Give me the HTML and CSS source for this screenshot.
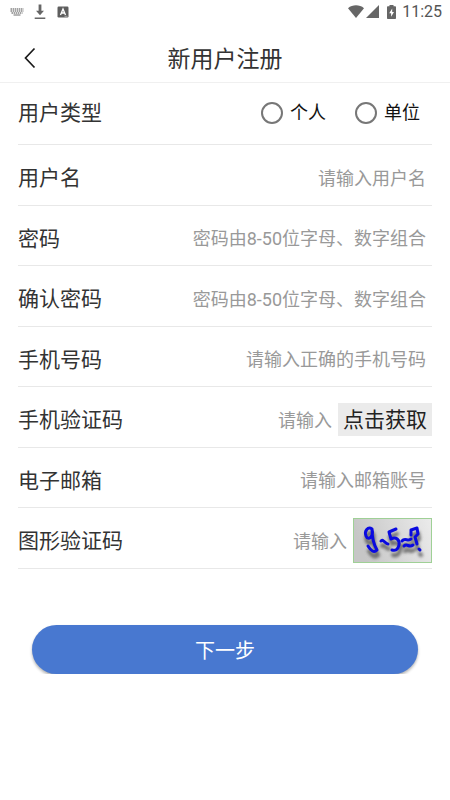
FILE: index.html
```html
<!DOCTYPE html>
<html lang="zh-CN">
<head>
    <meta charset="UTF-8">
    <meta name="viewport" content="width=device-width, initial-scale=1.0">
    <title>新用户注册</title>
    <link rel="stylesheet" href="styles.css">
</head>
<body>
    <!-- 状态栏 -->
    <div class="status-bar">
        <div class="status-left">
            <svg class="icon-keyboard" width="14" height="8" viewBox="0 0 14 8">
                <path d="M0.5 1h13M0.5 3h13M1.5 5h11" stroke="#858585" stroke-width="1.3" stroke-dasharray="1.5 0.6" fill="none"/>
                <path d="M3.5 7h7" stroke="#858585" stroke-width="1.2"/>
            </svg>
            <svg class="icon-download" width="12" height="16" viewBox="0 0 12 16">
                <path d="M4.6 0.5h2.8v6.2h2.6L6 11.2 2 6.7h2.6zM0.7 13.4h10.6v1.5H0.7z" fill="#666"/>
            </svg>
            <svg width="12" height="12" viewBox="0 0 12 12">
                <rect x="0.5" y="0.5" width="11" height="11" rx="1.2" fill="#5e5e5e"/>
                <path d="M3.5 9L6 3l2.5 6M4.3 7h3.4" stroke="#fff" stroke-width="1.3" fill="none"/>
                <path d="M7.5 10.3h3" stroke="#bbb" stroke-width="0.8"/>
            </svg>
        </div>
        <div class="status-right">
            <svg width="16" height="13" viewBox="0 0 16 13">
                <path d="M8 13L0 3.2C4.5-0.6 11.5-0.6 16 3.2z" fill="#666"/>
            </svg>
            <svg class="icon-signal" width="13" height="13" viewBox="0 0 13 13">
                <path d="M13 0v13H0z" fill="#666"/>
            </svg>
            <svg class="icon-battery" width="9" height="14" viewBox="0 0 9 14">
                <path d="M2.5 0h4v1.3H8.2q0.8 0 0.8 0.8V13.2q0 0.8-0.8 0.8H0.8Q0 14 0 13.2V2.1Q0 1.3 0.8 1.3H2.5z" fill="#666"/>
                <path d="M5.2 3.5L2.2 8.3h1.9v3.5L7 7H5.2z" fill="#fff"/>
            </svg>
            <span class="time">11:25</span>
        </div>
    </div>

    <!-- 标题栏 -->
    <header class="header">
        <button type="button" class="back" aria-label="返回">
            <svg width="12" height="22" viewBox="0 0 12 22">
                <path d="M10.5 1.5L1.5 11l9 9.5" stroke="#1a1a1a" stroke-width="1.7" fill="none"/>
            </svg>
        </button>
        <h1>新用户注册</h1>
    </header>

    <!-- 注册表单 -->
    <form class="form">
        <div class="row row-type" role="radiogroup" aria-labelledby="typeLabel">
            <span class="label" id="typeLabel">用户类型</span>
            <div class="options">
                <label class="option"><input type="radio" name="type" value="person">个人</label>
                <label class="option"><input type="radio" name="type" value="company">单位</label>
            </div>
        </div>
        <div class="row">
            <label class="label" for="username">用户名</label>
            <input class="field" type="text" id="username" placeholder="请输入用户名">
        </div>
        <div class="row">
            <label class="label" for="password">密码</label>
            <input class="field" type="password" id="password" placeholder="密码由8-50位字母、数字组合">
        </div>
        <div class="row">
            <label class="label" for="confirm">确认密码</label>
            <input class="field" type="password" id="confirm" placeholder="密码由8-50位字母、数字组合">
        </div>
        <div class="row">
            <label class="label" for="phone">手机号码</label>
            <input class="field" type="tel" id="phone" placeholder="请输入正确的手机号码">
        </div>
        <div class="row">
            <label class="label" for="smsCode">手机验证码</label>
            <input class="field" type="text" id="smsCode" placeholder="请输入">
            <button type="button" class="get-code">点击获取</button>
        </div>
        <div class="row">
            <label class="label" for="email">电子邮箱</label>
            <input class="field" type="email" id="email" placeholder="请输入邮箱账号">
        </div>
        <div class="row">
            <label class="label" for="captcha">图形验证码</label>
            <input class="field" type="text" id="captcha" placeholder="请输入">
            <button type="button" class="captcha" aria-label="刷新验证码">
                <svg width="77" height="43" viewBox="0 0 77 43">
                    <defs>
                        <linearGradient id="captchaBg" x1="0" y1="0.2" x2="1" y2="0">
                            <stop offset="0" stop-color="#c6c6c6"/>
                            <stop offset="1" stop-color="#ebebeb"/>
                        </linearGradient>
                        <filter id="soft" x="-20%" y="-20%" width="140%" height="150%">
                            <feGaussianBlur stdDeviation="1.8"/>
                        </filter>
                        <g id="marks" fill="none" stroke-linecap="round" stroke-linejoin="round">
                            <path d="M18 10C14 7 10 12 12 17C14 22 20 18 18 10C18 17 20 26 23 31C20 34 17 32 14 27"/>
                            <path d="M27 22C29 19 31 25 34 25"/>
                            <path d="M42 10L35 13L37 20C42 17 46 21 45 26C44 31 41 32 38 31"/>
                            <path d="M48 22C51 18 54 23 57 20M50 27C53 24 55 29 59 26"/>
                            <path d="M57 16L57 11L63 9L64 15L61 18L63 25M65 30L66 31"/>
                        </g>
                    </defs>
                    <rect width="77" height="43" fill="url(#captchaBg)"/>
                    <use href="#marks" x="1" y="5" stroke="#444" stroke-width="4" opacity="0.7" filter="url(#soft)"/>
                    <use href="#marks" stroke="#0a0ae0" stroke-width="3"/>
                </svg>
            </button>
        </div>
        <button type="submit" class="next">下一步</button>
    </form>
</body>
</html>
```

FILE: styles.css
```css
* {
    box-sizing: border-box;
}

body {
    margin: 0;
    background-color: #fff;
    color: #333;
    font-family: Roboto, "Noto Sans CJK SC", sans-serif;
}

button,
input {
    margin: 0;
    padding: 0;
    border: none;
    font-family: inherit;
}

button {
    cursor: pointer;
}

svg {
    display: block;
}

/* 状态栏 */
.status-bar {
    display: flex;
    justify-content: space-between;
    align-items: center;
    height: 23px;
    padding: 0 8px 0 10px;
}

.status-left,
.status-right {
    display: flex;
    align-items: center;
}

.icon-download {
    margin: 0 11px 0 10px;
}

.icon-signal {
    margin: 0 8px 0 2px;
}

.icon-battery {
    margin-right: 6px;
}

.time {
    color: #555;
    font-size: 16px;
    line-height: 22px;
}

/* 标题栏 */
.header {
    position: relative;
    height: 60px;
    padding-top: 14px;
    border-bottom: 1px solid #f0f0f0;
}

    .header h1 {
        margin: 0;
        font-size: 23px;
        font-weight: normal;
        line-height: 46px;
        text-align: center;
    }

.back {
    position: absolute;
    top: 13px;
    left: 14px;
    padding: 11px 10px;
    background: none;
}

/* 表单 */
.form {
    padding: 0 18px;
}

.row {
    display: flex;
    align-items: center;
    height: 61px;
    padding-top: 6px;
    border-bottom: 1px solid #e8e8e8;
}

    .row:nth-child(odd) {
        height: 60px;
    }

    .row.row-type {
        justify-content: space-between;
        height: 62px;
        padding: 0 12px 2px 0;
    }

.label {
    flex: none;
    font-size: 21px;
    line-height: 30px;
}

.field {
    flex: 1;
    min-width: 0;
    height: 44px;
    padding-right: 6px;
    background: none;
    color: #333;
    font-size: 18px;
    text-align: right;
    outline: none;
}

    .field::placeholder {
        color: #999;
    }

.options {
    display: flex;
    gap: 29px;
}

.option {
    display: flex;
    align-items: center;
    gap: 7px;
    color: #111;
    font-size: 18px;
    line-height: 30px;
}

    .option input {
        appearance: none;
        width: 22px;
        height: 22px;
        border: 2px solid #777;
        border-radius: 50%;
    }

        .option input:checked {
            border: 7px solid #4878d0;
        }

.get-code {
    height: 33px;
    margin-bottom: 2px;
    padding: 0 5px;
    background-color: #ebebeb;
    color: #222;
    font-size: 21px;
    line-height: 35px;
}

.captcha {
    margin-bottom: 2px;
    border: 1px solid #9fd096;
}

.next {
    display: block;
    width: calc(100% - 28px);
    height: 49px;
    margin: 56px auto 0;
    border-radius: 25px;
    background-color: #4878d0;
    box-shadow: 0 2px 3px rgba(0, 0, 0, 0.3);
    color: #fff;
    font-size: 20px;
}
```
